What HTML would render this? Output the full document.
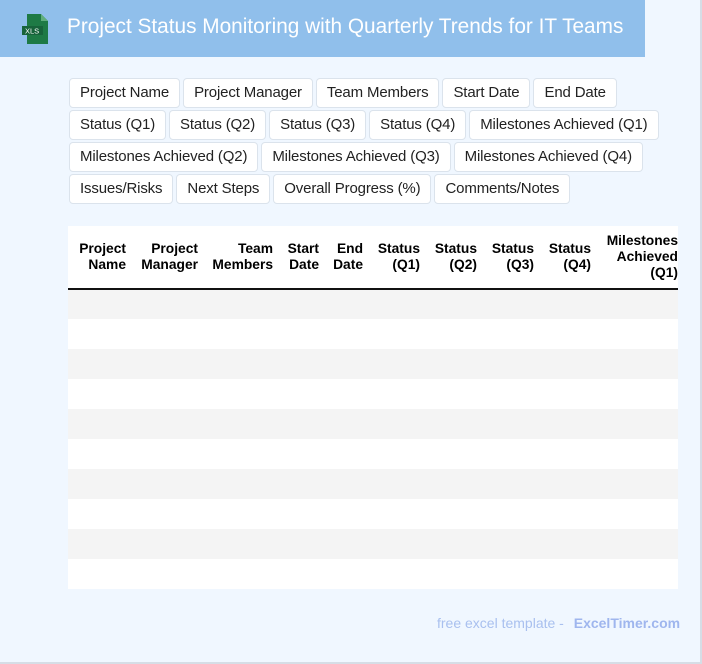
<!DOCTYPE html>
<html><head><meta charset="utf-8"><style>
*{box-sizing:border-box;margin:0;padding:0}
body{width:702px;height:664px;background:#f0f7ff;font-family:"Liberation Sans",sans-serif;position:relative;overflow:hidden;border-right:2px solid #d6dde6;border-bottom:2px solid #d6dde6}
.hdr{position:absolute;left:0;top:0;width:645px;height:57px;background:#90bfeb}
.hdr h1{position:absolute;left:67px;top:15px;font-size:20.8px;font-weight:normal;color:#fff;white-space:nowrap}
.tags{position:absolute;left:69px;top:78px;width:600px}
.row{display:flex;gap:3px;margin-bottom:2px}
.tag{height:30px;line-height:28px;padding:0 10px;background:#fff;border:1px solid #dbe3ec;border-radius:4px;font-size:15px;color:#222;white-space:nowrap;letter-spacing:-0.15px}
table{position:absolute;left:68px;top:226px;width:610px;border-collapse:collapse;table-layout:fixed;background:#fff}
th{font-size:13.8px;line-height:16px;font-weight:bold;text-align:right;vertical-align:middle;height:63px;border-bottom:2px solid #111;color:#000;padding:0}
td{height:30px}
tr.g td{background:#f4f4f4}
.foot{position:absolute;left:437px;top:615px;font-size:14px;color:#a9c0ef}
.foot b{color:#9fb6ee;margin-left:6px}
</style></head><body>
<div class="hdr">
<svg style="position:absolute;left:22px;top:14px" width="28" height="30" viewBox="0 0 28 30"><path d="M5 0h14l7 7v23H5z" fill="#1e7a45"/><path d="M19 0v7h7z" fill="#5fae7c"/><rect x="0" y="12" width="21" height="9" fill="#17633a"/><text x="3" y="19.5" font-size="7.5" fill="#fff" font-family="Liberation Sans">XLS</text></svg>
<h1>Project Status Monitoring with Quarterly Trends for IT Teams</h1></div>
<div class="tags">
<div class="row"><span class="tag">Project Name</span><span class="tag">Project Manager</span><span class="tag">Team Members</span><span class="tag">Start Date</span><span class="tag">End Date</span></div>
<div class="row"><span class="tag">Status (Q1)</span><span class="tag">Status (Q2)</span><span class="tag">Status (Q3)</span><span class="tag">Status (Q4)</span><span class="tag">Milestones Achieved (Q1)</span></div>
<div class="row"><span class="tag">Milestones Achieved (Q2)</span><span class="tag">Milestones Achieved (Q3)</span><span class="tag">Milestones Achieved (Q4)</span></div>
<div class="row"><span class="tag">Issues/Risks</span><span class="tag">Next Steps</span><span class="tag">Overall Progress (%)</span><span class="tag">Comments/Notes</span></div>
</div>
<table>
<colgroup><col style="width:58px"><col style="width:72px"><col style="width:75px"><col style="width:46px"><col style="width:44px"><col style="width:57px"><col style="width:57px"><col style="width:57px"><col style="width:57px"><col style="width:87px"></colgroup>
<tr><th>Project Name</th><th>Project Manager</th><th>Team Members</th><th>Start Date</th><th>End Date</th><th>Status (Q1)</th><th>Status (Q2)</th><th>Status (Q3)</th><th>Status (Q4)</th><th>Milestones Achieved (Q1)</th></tr>
<tr class="g"><td colspan="10"></td></tr><tr><td colspan="10"></td></tr>
<tr class="g"><td colspan="10"></td></tr><tr><td colspan="10"></td></tr>
<tr class="g"><td colspan="10"></td></tr><tr><td colspan="10"></td></tr>
<tr class="g"><td colspan="10"></td></tr><tr><td colspan="10"></td></tr>
<tr class="g"><td colspan="10"></td></tr><tr><td colspan="10"></td></tr>
</table>
<div class="foot">free excel template - <b>ExcelTimer.com</b></div>
</body></html>
